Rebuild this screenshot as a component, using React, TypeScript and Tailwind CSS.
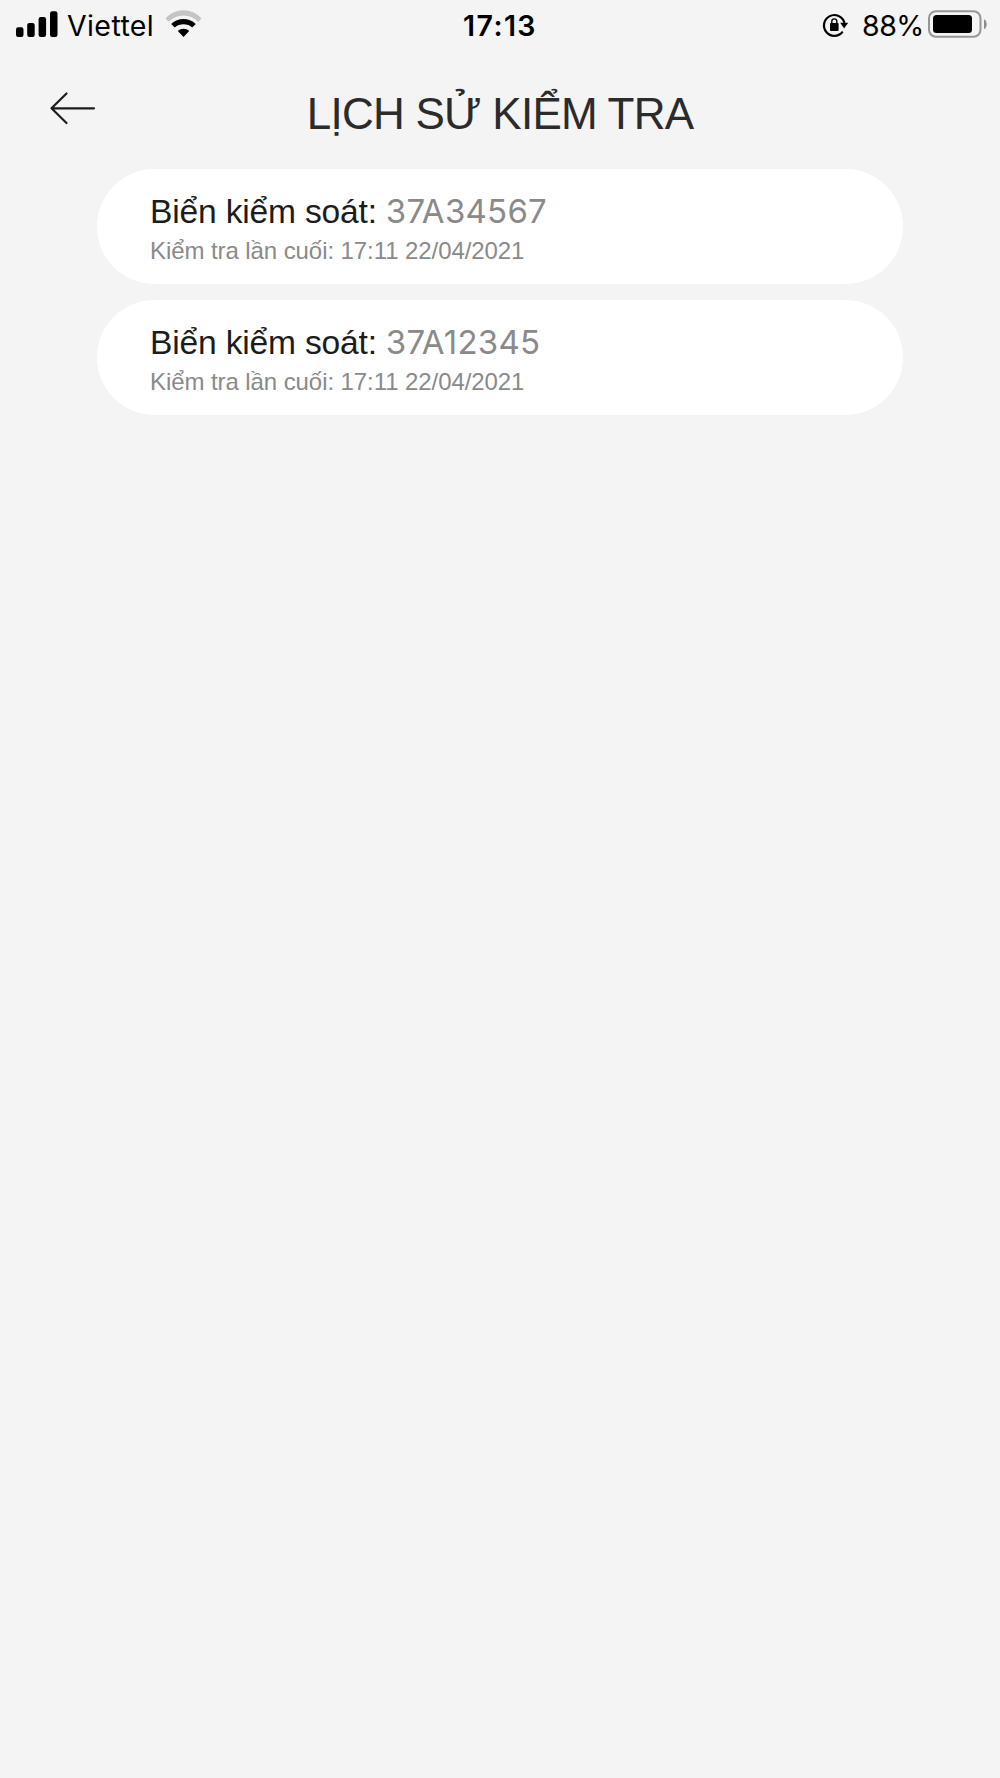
const history = [
  { plate: '37A34567', checkedAt: '17:11 22/04/2021' },
  { plate: '37A12345', checkedAt: '17:11 22/04/2021' },
];

function StatusBar() {
  return (
    <div className="grid grid-cols-3 h-[52px] text-black font-['Inter',sans-serif] text-[28.5px] leading-[51px]">
      {/* Carrier */}
      <div className="flex pl-4">
        <svg width="42" height="28" viewBox="0 0 42 28" className="mt-[10px] shrink-0">
          <rect x="0" y="17.3" width="7.5" height="9.7" rx="2.2" />
          <rect x="11.2" y="12.9" width="7.5" height="14.1" rx="2.2" />
          <rect x="22.6" y="7" width="7.5" height="20" rx="2.2" />
          <rect x="34" y="1.2" width="7.5" height="25.8" rx="2.2" />
        </svg>
        <span className="ml-[9px] w-[89px] tracking-[0.4px]">Viettel</span>
        <svg width="38" height="28" viewBox="0 0 38 28" className="mt-[10px] ml-[9px] shrink-0">
          <path d="M0.5 8.4C10.5 -2.4 26.5 -2.4 36.5 8.4L33.3 11.7C25 3.4 12 3.4 3.7 11.7Z" fill="#c4c4c4" />
          <path d="M6.2 14.1C13 7.3 24 7.3 30.8 14.1L27.2 17.6C22.4 13.2 14.6 13.2 9.8 17.6Z" />
          <path d="M12.8 21C16 18.1 21 18.1 24.2 21L18.5 27Z" />
        </svg>
      </div>

      <div className="text-center font-semibold tracking-[1.4px]">17:13</div>

      {/* Battery */}
      <div className="flex justify-end pr-[12px]">
        <svg width="28" height="26" viewBox="0 0 28 26" className="mt-3 shrink-0">
          <path d="M20.2 20.3A10.4 10.4 0 1 1 22.2 10" fill="none" stroke="#000" strokeWidth="2.2" strokeLinecap="round" />
          <path d="M18.2 10.8H26.2L22.1 16.6Z" />
          <rect x="8" y="11" width="8.6" height="8" rx="1" />
          <path d="M9.8 12V9.4a2.5 2.5 0 0 1 5 0V12" fill="none" stroke="#000" strokeWidth="1.4" />
        </svg>
        <span className="ml-3 w-[62px] tracking-[-0.5px]">88%</span>
        <svg width="60" height="28" viewBox="0 0 60 28" className="mt-[10px] ml-[4px] shrink-0">
          <rect x="1" y="1.2" width="51.5" height="25.6" rx="7" fill="none" stroke="#969696" strokeWidth="2" />
          <rect x="5" y="5" width="39" height="18" rx="3.5" />
          <path d="M56 9.3C59.6 11 59.6 17.6 56 19.3Z" fill="#8c8c8c" />
        </svg>
      </div>
    </div>
  );
}

function Header() {
  return (
    <header className="grid grid-cols-[150px_1fr_150px] h-[117px]">
      <button aria-label="Quay lại" className="flex items-start pl-[49px] pt-[39px]">
        <svg width="48" height="34" viewBox="0 0 48 34" fill="none" stroke="#1c1c1c" strokeWidth="2.2" strokeLinecap="round" strokeLinejoin="round">
          <path d="M17.5 2.5L2.5 17.3L17.5 32M2.5 17.3H45" />
        </svg>
      </button>
      <h1 className="pt-[32px] text-center text-[44px] leading-[60px] tracking-[-0.75px] text-[#2b2b2b]">LỊCH SỬ KIỂM TRA</h1>
    </header>
  );
}

export default function App() {
  return (
    <div className="min-h-[1778px] bg-[#f4f4f4] font-['Liberation_Sans',sans-serif]">
      <StatusBar />
      <Header />
      <ul className="flex flex-col gap-[16.5px] mx-[97px]">
        {history.map((item) => (
          <li key={item.plate} className="h-[114.5px] rounded-full bg-white pl-[53px] pt-[22px]">
            <p className="flex items-baseline h-10 text-[33.6px] leading-10 text-[#1c1c1c] whitespace-nowrap">
              <span className="tracking-[-0.18px]">Biển kiểm soát:</span>
              <span className="ml-[9px] font-['Inter',sans-serif] text-[33px] tracking-[0.25px] text-[#8a8a8a]">{item.plate}</span>
            </p>
            <p className="mt-1 text-2xl leading-[31px] tracking-[-0.08px] text-[#8a8a8a]">Kiểm tra lần cuối: {item.checkedAt}</p>
          </li>
        ))}
      </ul>
    </div>
  );
}
